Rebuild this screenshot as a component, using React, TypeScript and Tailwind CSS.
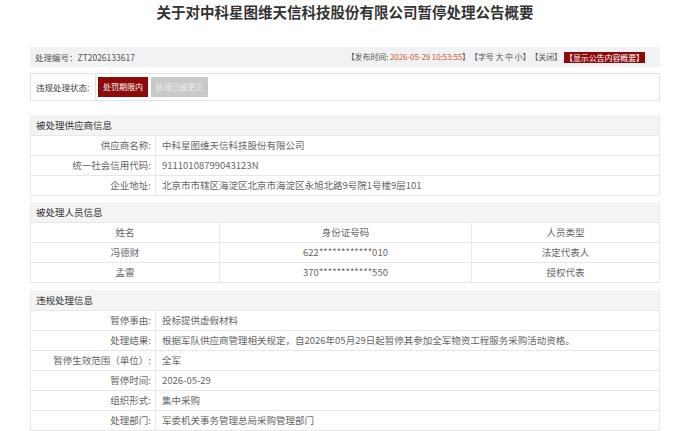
const supplierRows = [
  { label: '供应商名称:', value: '中科星图维天信科技股份有限公司' },
  { label: '统一社会信用代码:', value: '91110108799043123N' },
  { label: '企业地址:', value: '北京市市辖区海淀区北京市海淀区永旭北路9号院1号楼9层101' },
];

const people = [
  { name: '冯德财', id: '622************010', type: '法定代表人' },
  { name: '孟雷', id: '370************550', type: '授权代表' },
];

const violationRows = [
  { label: '暂停事由:', value: '投标提供虚假材料' },
  { label: '处理结果:', value: '根据军队供应商管理相关规定，自2026年05月29日起暂停其参加全军物资工程服务采购活动资格。' },
  { label: '暂停生效范围（单位）:', value: '全军' },
  { label: '暂停时间:', value: '2026-05-29' },
  { label: '组织形式:', value: '集中采购' },
  { label: '处理部门:', value: '军委机关事务管理总局采购管理部门' },
];

const SectionHeader = ({ title }: { title: string }) => (
  <div className="h-[20px] bg-[#f4f4f4] px-[5px] flex items-center text-[9.5px] text-[#333]">{title}</div>
);

const LabelRow = ({ label, value }: { label: string; value: string }) => (
  <div className="flex h-[20px] border-t border-[#e8e8e8] text-[9.5px] text-[#666]">
    <div className="w-[125px] shrink-0 border-r border-[#e8e8e8] flex items-center justify-end pr-[4px]">{label}</div>
    <div className="flex items-center pl-[6px] whitespace-nowrap">{value}</div>
  </div>
);

export default function App() {
  return (
    <div className="w-[700px] h-[431px] overflow-hidden bg-white font-['Microsoft_YaHei','Noto_Sans_CJK_SC',sans-serif]">
      <h1 className="pt-[2px] h-[25px] text-center text-[14.5px] leading-[20px] font-bold text-[#333] pr-[10px]">
        关于对中科星图维天信科技股份有限公司暂停处理公告概要
      </h1>

      <div className="mx-[30px] mt-[22px] w-[630px]">
        <div className="h-[20px] bg-[#f1f2f4] flex items-center justify-between pl-[5px] pr-[15px] text-[8.5px] text-[#555]">
          <span>处理编号：ZT2026133617</span>
          <span className="flex items-center text-[8px] tracking-[-0.1px]">
            <span>【发布时间: <span className="text-[#d2542e]">2026-05-29 10:53:55</span>】</span>
            <span>【字号 大 中 小】</span>
            <span>【关闭】</span>
            <span className="ml-[2px] bg-[#8c0a0a] text-white h-[11px] leading-[11px] px-[1px]">【显示公告内容概要】</span>
          </span>
        </div>

        <div className="mt-[6px] h-[28px] border border-[#e2e2e2] flex text-[8.5px]">
          <div className="w-[65px] border-r border-[#e2e2e2] flex items-center pl-[5px] text-[#444]">违规处理状态:</div>
          <div className="flex items-center gap-[3px] pl-[2px] text-[8px]">
            <span className="h-[20px] w-[50px] bg-[#8c0a0a] text-white flex items-center justify-center whitespace-nowrap">处罚期限内</span>
            <span className="h-[20px] w-[57px] bg-[#c9c9c9] text-[#ececec] flex items-center justify-center whitespace-nowrap">处理已被更正</span>
          </div>
        </div>

        <div className="mt-[14px] border border-[#e8e8e8] border-t-0">
          <SectionHeader title="被处理供应商信息" />
          {supplierRows.map((r) => (
            <LabelRow key={r.label} label={r.label} value={r.value} />
          ))}
        </div>

        <div className="mt-[6px] border border-[#e8e8e8] border-t-0">
          <SectionHeader title="被处理人员信息" />
          <div className="grid grid-cols-[189px_252px_1fr] h-[20px] border-t border-[#e8e8e8] text-[9.5px] text-[#666]">
            <div className="flex items-center justify-center border-r border-[#e8e8e8]">姓名</div>
            <div className="flex items-center justify-center border-r border-[#e8e8e8]">身份证号码</div>
            <div className="flex items-center justify-center">人员类型</div>
          </div>
          {people.map((p) => (
            <div key={p.name} className="grid grid-cols-[189px_252px_1fr] h-[20px] border-t border-[#e8e8e8] text-[9.5px] text-[#666]">
              <div className="flex items-center justify-center border-r border-[#e8e8e8]">{p.name}</div>
              <div className="flex items-center justify-center border-r border-[#e8e8e8]">{p.id}</div>
              <div className="flex items-center justify-center">{p.type}</div>
            </div>
          ))}
        </div>

        <div className="mt-[7px] border border-[#e8e8e8] border-t-0">
          <SectionHeader title="违规处理信息" />
          {violationRows.map((r) => (
            <LabelRow key={r.label} label={r.label} value={r.value} />
          ))}
        </div>
      </div>
    </div>
  );
}
